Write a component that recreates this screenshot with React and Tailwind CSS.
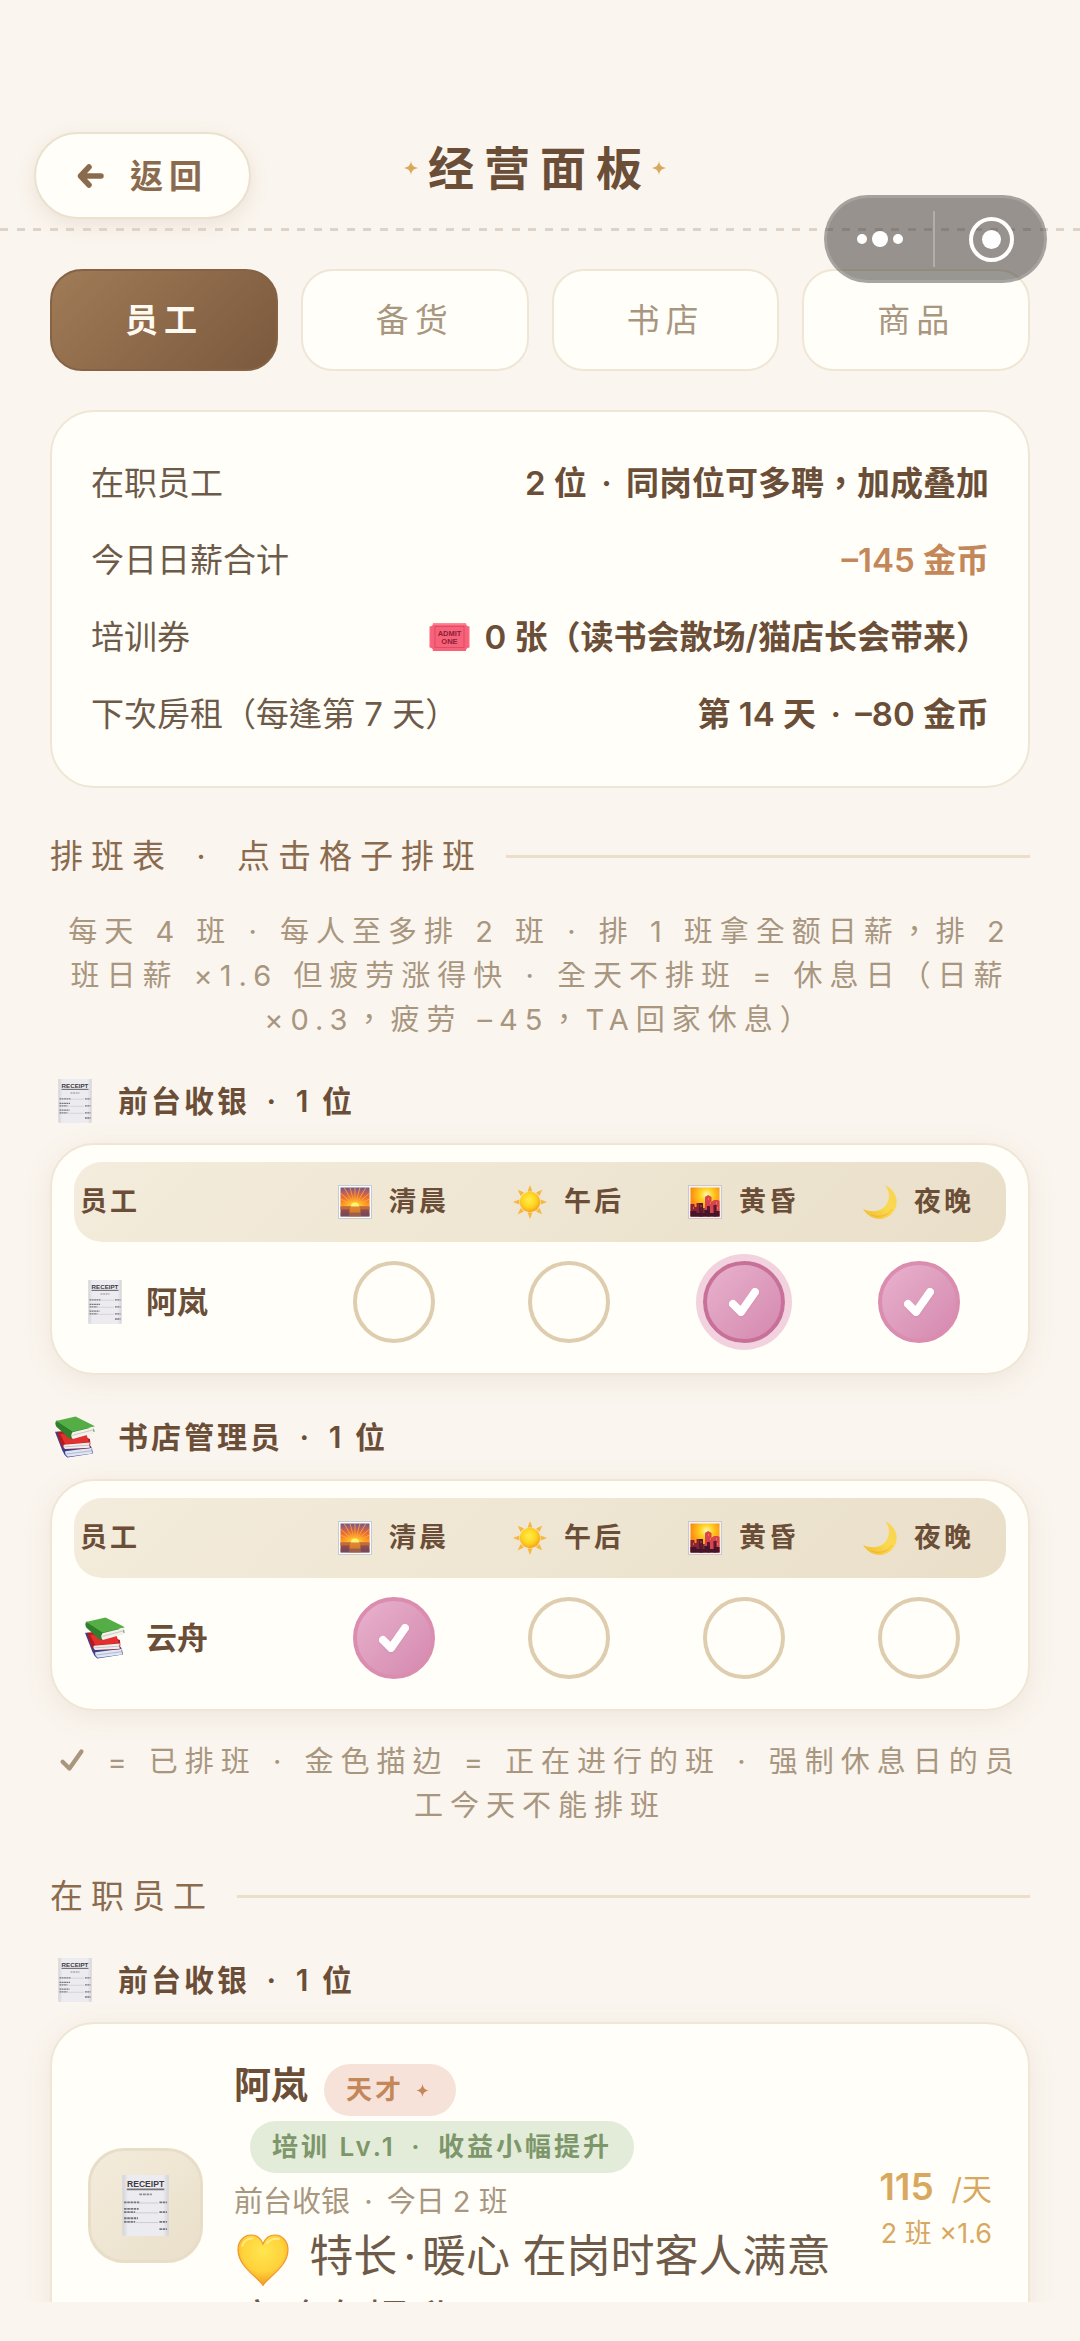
import { useState } from "react";
import clsx from "clsx";

const TABS = ["员工", "备货", "书店", "商品"];

const SHIFTS = [
  { id: "dawn", label: "清晨", Icon: SunriseIcon },
  { id: "noon", label: "午后", Icon: SunIcon },
  { id: "dusk", label: "黄昏", Icon: SunsetIcon },
  { id: "night", label: "夜晚", Icon: MoonIcon },
];

const GROUPS = [
  {
    role: "前台收银",
    Icon: ReceiptIcon,
    staff: [{ name: "阿岚", shifts: ["dusk", "night"], current: "dusk" }],
  },
  {
    role: "书店管理员",
    Icon: BooksIcon,
    staff: [{ name: "云舟", shifts: ["dawn"], current: null }],
  },
];

/* ===== Icons ===== */

function Sparkle({ className }) {
  return (
    <svg viewBox="0 0 14 14" className={className} fill="currentColor" aria-hidden="true">
      <path d="M7 0C7.7 4.2 9.2 6.1 14 7 9.2 7.9 7.7 9.8 7 14 6.3 9.8 4.8 7.9 0 7 4.8 6.1 6.3 4.2 7 0Z" />
    </svg>
  );
}

function BackArrow() {
  return (
    <svg
      viewBox="0 0 27 24"
      className="w-[27px] h-6"
      fill="none"
      stroke="currentColor"
      strokeWidth="5.5"
      strokeLinecap="round"
      strokeLinejoin="round"
      aria-hidden="true"
    >
      <path d="M24 12H4M12 3 3.5 12 12 21" />
    </svg>
  );
}

function Tick({ className }) {
  return (
    <svg
      viewBox="0 0 30 28"
      className={className}
      fill="none"
      stroke="currentColor"
      strokeLinecap="round"
      strokeLinejoin="round"
      aria-hidden="true"
    >
      <path d="M4 16 12 24 26 4" />
    </svg>
  );
}

function ReceiptIcon({ className }) {
  return (
    <svg viewBox="0 0 34 44" className={clsx("tracking-normal", className)} aria-hidden="true">
      <defs>
        <linearGradient id="receiptPaper" x1="0" x2="1" y1="0" y2="0">
          <stop offset="0" stopColor="#d3d2d6" />
          <stop offset="0.12" stopColor="#ecebf0" />
          <stop offset="0.88" stopColor="#ecebf0" />
          <stop offset="1" stopColor="#d3d2d6" />
        </linearGradient>
      </defs>
      <path d="M.3 0H33.7V42.5Q33.7 44 32.5 44H1.5Q.3 44 .3 42.5Z" fill="url(#receiptPaper)" />
      <text
        x="17"
        y="8.6"
        textAnchor="middle"
        fontFamily="Liberation Sans, sans-serif"
        fontSize="6.2"
        fontWeight="700"
        fill="#3c3a3e"
      >
        RECEIPT
      </text>
      <path d="M3.5 10.4h27" stroke="#77757a" strokeWidth="1.2" />
      <path d="M12.5 14h9" stroke="#8d8b90" strokeWidth="1.2" strokeDasharray="2 .6" />
      <path
        d="M1.5 19.8h11M27 19.8h5.5M1.5 24.4h10.5M1.5 26.8h8M27 26.8h5.5M1.5 31.2h10M1.5 33.8h8M27 33.8h5.5M27 39h5.5"
        stroke="#77757a"
        strokeWidth="1.3"
        strokeDasharray="1.8 .5"
      />
      <path d="M12 20.2h14M10 27.3h16M10 34.3h16" stroke="#c8c6cb" strokeWidth=".6" />
    </svg>
  );
}

function BooksIcon({ className }) {
  return (
    <svg viewBox="0 0 39 40" className={className} aria-hidden="true">
      <path d="M0 15 9 15 35 29 36 31 37 36 12 40Q9 38 7 33Z" fill="#3a3f8f" />
      <path d="M10 34 36 30.5Q34.8 33 36.5 36L12.5 39.2Q9.4 37.5 10 34Z" fill="#dfe6f2" />
      <path d="M11 36.6 36 33.4" stroke="#9aa9c6" strokeWidth=".7" />
      <path d="M2 15 14 14 34 22 34.5 26 34 31 10 32Q6 30 4 22Z" fill="#b3191d" />
      <path d="M5 17 30 15 33 25 10 27Z" fill="#e2302e" />
      <path d="M8.5 27.6 34 25.4Q32.6 28 34 30.4L10 31.6Q7.6 30.6 8.5 27.6Z" fill="#f0eeee" />
      <path d="M9 29.6 33.4 28" stroke="#b9b3b3" strokeWidth=".7" />
      <path d="M1 4 16 20 38.5 14.8 38 12Z" fill="#2d7c2a" />
      <path d="M1 4.5 20 0 39 9.6 17 15Z" fill="#55ad45" />
      <path d="M1 4.5Q-.5 7 1.4 10L14 21.4 17 22Q14 19 17 15Z" fill="#2f7f2c" />
      <path d="M17 15.4 38.6 10Q36.4 13 38.2 16L17.4 22Q14.6 19 17 15.4Z" fill="#f3f1ec" />
      <path d="M17 18.4 37.4 13" stroke="#bcb8ae" strokeWidth=".7" />
    </svg>
  );
}

function SunriseIcon({ className }) {
  return (
    <svg viewBox="0 0 34 34" className={className} aria-hidden="true">
      <defs>
        <linearGradient id="dawnSky" x1="0" x2="0" y1="0" y2="1">
          <stop offset="0" stopColor="#75578a" />
          <stop offset="0.45" stopColor="#e3663f" />
          <stop offset="1" stopColor="#ff9a20" />
        </linearGradient>
        <radialGradient id="dawnSun" cx="0.5" cy="1" r="0.62">
          <stop offset="0" stopColor="#fff59a" />
          <stop offset="0.3" stopColor="#ffc52c" />
          <stop offset="1" stopColor="#ff8a20" stopOpacity="0" />
        </radialGradient>
      </defs>
      <rect x=".5" y=".5" width="33" height="33" fill="#fdfdfd" stroke="#c3ccd2" />
      <rect x="2.5" y="2.5" width="29" height="19" fill="url(#dawnSky)" />
      <path
        d="M17 21 2.5 8M17 21 6 2.5M17 21 12 2.5M17 21V2.5M17 21 22 2.5M17 21 28 2.5M17 21 31.5 8M17 21 2.5 14M17 21 31.5 14"
        stroke="#ffb43c"
        strokeWidth="1"
        opacity=".75"
      />
      <rect x="2.5" y="2.5" width="29" height="19" fill="url(#dawnSun)" />
      <rect x="2.5" y="21.5" width="29" height="10" fill="#8c4c4e" />
      <path d="M2.5 21.5h29v3h-29z" fill="#c56a35" />
      <path d="M12 21.5h10l1 10H11z" fill="#e58a2c" opacity=".85" />
      <path d="M2.5 27.5h29v4h-29z" fill="#6d4560" opacity=".55" />
      <path d="M13 21.5a4 4 0 0 1 8 0Z" fill="#fff27a" />
    </svg>
  );
}

function SunIcon({ className }) {
  return (
    <svg viewBox="0 0 34 34" className={className} aria-hidden="true">
      <defs>
        <radialGradient id="sunDisc" cx="0.45" cy="0.4" r="0.6">
          <stop offset="0" stopColor="#fff04a" />
          <stop offset="0.6" stopColor="#ffd21f" />
          <stop offset="1" stopColor="#f5a31a" />
        </radialGradient>
      </defs>
      <g fill="#f6b73a">
        <path d="M17 0l2.4 6.4h-4.8z" />
        <path d="M17 34l2.4-6.4h-4.8z" />
        <path d="M0 17l6.4-2.4v4.8z" />
        <path d="M34 17l-6.4-2.4v4.8z" />
        <path d="M4.8 4.8l6.2 2.8-3.4 3.4z" />
        <path d="M29.2 4.8l-6.2 2.8 3.4 3.4z" />
        <path d="M4.8 29.2l6.2-2.8-3.4-3.4z" />
        <path d="M29.2 29.2l-6.2-2.8 3.4-3.4z" />
      </g>
      <circle cx="17" cy="17" r="10.2" fill="url(#sunDisc)" />
    </svg>
  );
}

function SunsetIcon({ className }) {
  return (
    <svg viewBox="0 0 34 34" className={className} aria-hidden="true">
      <defs>
        <radialGradient id="duskSky" cx="0.55" cy="0.25" r="0.8">
          <stop offset="0" stopColor="#fff8b0" />
          <stop offset="0.25" stopColor="#ffd428" />
          <stop offset="0.6" stopColor="#ff9a10" />
          <stop offset="1" stopColor="#ee5a18" />
        </radialGradient>
      </defs>
      <rect x=".5" y=".5" width="33" height="33" fill="#f6f4f6" stroke="#c9c7cc" />
      <rect x="2.5" y="2.5" width="29" height="29" fill="url(#duskSky)" />
      <path d="M17 31.5V12l3-2 3.5 2v5l2.5-2h4l1.5 1v15.5Z" fill="#d8434e" />
      <path d="M2.5 31.5V19h4v3h2v-4h5v5h4v8.5Z" fill="#8a2434" />
      <path d="M11 31.5V18h4v13.5ZM19 31.5V21h3v10.5ZM25.5 31.5V20h3v11.5Z" fill="#571a30" />
      <path d="M2.5 31.5V26h6v2h8v-3h5v3h5v-2h5v5.5Z" fill="#451428" />
      <path d="M5 23h1M12.5 21h1M20 14h1M22 18h1M28 18h1M29 23h1M16.5 24h1" stroke="#ffb03c" strokeWidth="1" />
    </svg>
  );
}

function MoonIcon({ className }) {
  return (
    <svg viewBox="0 0 34 34" className={className} aria-hidden="true">
      <defs>
        <linearGradient id="moonFace" x1="0" x2="1" y1="1" y2="0">
          <stop offset="0" stopColor="#f2b92c" />
          <stop offset="0.5" stopColor="#fbd94e" />
          <stop offset="1" stopColor="#f7d455" />
        </linearGradient>
      </defs>
      <path
        d="M22 0C31 4 35.5 13 33 21.5 30 31.5 20 36 11 33 6 31.2 2 28 0 24 9 28 19 26.5 23.5 19.5 27.5 13 26.5 5.5 22 0Z"
        fill="url(#moonFace)"
      />
      <path d="M8 30c8 3 17 1 21-6" fill="none" stroke="#e6a92a" strokeWidth="1" opacity=".6" />
    </svg>
  );
}

function TicketIcon({ className }) {
  return (
    <svg viewBox="0 0 41 28" className={className} aria-hidden="true">
      <path
        d="M4 0H37A3.5 3.5 0 0 0 40.5 3.5V24.5A3.5 3.5 0 0 0 37 28H4A3.5 3.5 0 0 0 .5 24.5V3.5A3.5 3.5 0 0 0 4 0Z"
        fill="#f7617a"
      />
      <path d="M.5 5v18M40.5 5v18" stroke="#fbb6bf" strokeWidth="1.4" strokeDasharray="1.2 1.4" />
      <rect x="6" y="3.5" width="29" height="21" fill="none" stroke="#d9475f" strokeWidth=".8" />
      <path d="M4 .8h33" stroke="#ff97a6" strokeWidth="1.2" />
      <g
        fontFamily="Liberation Sans, sans-serif"
        fontSize="7.5"
        fontWeight="700"
        fill="#8c2236"
        textAnchor="middle"
      >
        <text x="20.5" y="12.5">ADMIT</text>
        <text x="20.5" y="21">ONE</text>
      </g>
    </svg>
  );
}

function HeartIcon({ className }) {
  return (
    <svg viewBox="0 0 52 52" className={className} aria-hidden="true">
      <defs>
        <radialGradient id="heartFill" cx="0.5" cy="0.32" r="0.68">
          <stop offset="0" stopColor="#ffe650" />
          <stop offset="0.6" stopColor="#ffd23a" />
          <stop offset="1" stopColor="#f39a1e" />
        </radialGradient>
      </defs>
      <path
        d="M26 51.5C22 44 1 33 1 15.5 1 7 7 1 14 1c5.5 0 10 3.5 12 9 2-5.5 6.5-9 12-9 7 0 13 6 13 14.5C51 33 30 44 26 51.5Z"
        fill="url(#heartFill)"
        stroke="#f0962a"
        strokeWidth="1.2"
      />
      <path d="M5 12Q8 4 15 4.5M30 9Q35 3.5 42 5" fill="none" stroke="#fff3a0" strokeWidth="2" strokeLinecap="round" opacity=".7" />
    </svg>
  );
}

/* ===== Shared pieces ===== */

function Dot({ tight }) {
  return <span className={tight ? "px-px" : "px-[6px]"}>·</span>;
}

function SectionTitle({ children }) {
  return (
    <div className="mt-[46px] flex items-center gap-[23px]">
      <h2 className="text-[33px] leading-[44px] tracking-[8px] text-[#8b6b4e]">{children}</h2>
      <div className="h-[3px] flex-1 bg-[#ebdfca]" />
    </div>
  );
}

function Hint({ className, children }) {
  return (
    <p
      className={clsx(
        "text-center text-[29px] leading-[44px] tracking-[7px] text-[#a8967f]",
        className,
      )}
    >
      {children}
    </p>
  );
}

function GroupTitle({ Icon, role, count }) {
  return (
    <h3 className="flex items-center gap-[23px] pl-[5px] text-[30px] leading-[44px] tracking-[3px] font-semibold text-[#6b4e37]">
      <span className="w-10 flex justify-center">
        <Icon className="h-11 max-w-10" />
      </span>
      <span>
        {role} <Dot /> {count} 位
      </span>
    </h3>
  );
}

function StatRow({ label, children, accent }) {
  return (
    <div className="h-[77px] flex items-center justify-between text-[33px] leading-[44px]">
      <dt className="text-[#6e5a48]">{label}</dt>
      <dd
        className={clsx(
          "flex items-center font-semibold whitespace-pre",
          accent ? "text-[#c4875a]" : "text-[#6b4e37]",
        )}
      >
        {children}
      </dd>
    </div>
  );
}

function ShiftToggle({ label, checked, current, onChange }) {
  return (
    <label className="grid place-items-center text-white cursor-pointer">
      <input
        type="checkbox"
        aria-label={label}
        checked={checked}
        onChange={onChange}
        className={clsx(
          "col-start-1 row-start-1 size-[82px] appearance-none rounded-full border-4",
          !checked && "border-[#decdae]",
          checked && "bg-linear-135 from-[#e8b2cd] to-[#d488ae]",
          checked && !current && "border-[#db8db0]",
          checked && current && "border-[#c77199] ring-[7px] ring-[#f1d2de]",
        )}
      />
      {checked && (
        <Tick className="col-start-1 row-start-1 w-[30px] h-7 stroke-[8] drop-shadow-xs pointer-events-none" />
      )}
    </label>
  );
}

function ShiftTable({ group, schedule, onToggle }) {
  const { Icon, staff } = group;

  return (
    <table className="mt-5 block rounded-[44px] border-2 border-[#efe6d5] bg-[#fffef9] px-[22px] py-[17px] text-[#6b4e37] shadow-[0_6px_28px_rgba(139,107,78,0.1)]">
      <thead className="block rounded-[28px] bg-linear-135 from-[#f4ecdc] to-[#e9dfc9]">
        <tr className="grid h-20 grid-cols-[232fr_175fr_175fr_175fr_175fr] items-center text-[27px] leading-[40px] tracking-[3px]">
          <th className="pl-[6px] text-left font-semibold">员工</th>
          {SHIFTS.map((shift) => (
            <th key={shift.id} className="flex items-center justify-center gap-[17px] font-semibold">
              <shift.Icon className="size-[34px]" />
              {shift.label}
            </th>
          ))}
        </tr>
      </thead>
      <tbody className="block">
        {staff.map((person) => (
          <tr
            key={person.name}
            className="grid grid-cols-[232fr_175fr_175fr_175fr_175fr] items-center pt-[19px] pb-[13px]"
          >
            <th className="flex items-center gap-[21px] pl-[11px] text-[31px] leading-[44px] font-semibold">
              <span className="w-10 flex justify-center">
                <Icon className="h-11 max-w-10" />
              </span>
              {person.name}
            </th>
            {SHIFTS.map((shift) => (
              <td key={shift.id} className="flex justify-center">
                <ShiftToggle
                  label={`${person.name} ${shift.label}`}
                  checked={schedule[person.name].includes(shift.id)}
                  current={person.current === shift.id}
                  onChange={() => onToggle(person.name, shift.id)}
                />
              </td>
            ))}
          </tr>
        ))}
      </tbody>
    </table>
  );
}

function Capsule() {
  return (
    <div className="absolute top-[195px] right-[33px] flex h-[88px] w-[223px] items-center rounded-full border-[3px] border-white/15 bg-[#33302c]/50">
      <button aria-label="更多" className="flex-1 flex items-center justify-center gap-[5px]">
        <span className="size-[10px] rounded-full bg-white" />
        <span className="size-4 rounded-full bg-white" />
        <span className="size-[10px] rounded-full bg-white" />
      </button>
      <span className="h-14 w-[2px] bg-white/25" />
      <button aria-label="关闭" className="flex-1 flex items-center justify-center pl-[3px]">
        <span className="size-[45px] rounded-full border-4 border-white flex items-center justify-center">
          <span className="size-[19px] rounded-full bg-white" />
        </span>
      </button>
    </div>
  );
}

/* ===== Page ===== */

function App() {
  const [activeTab, setActiveTab] = useState("员工");
  const [schedule, setSchedule] = useState({
    阿岚: GROUPS[0].staff[0].shifts,
    云舟: GROUPS[1].staff[0].shifts,
  });

  const toggleShift = (name, id) => {
    setSchedule((prev) => ({
      ...prev,
      [name]: prev[name].includes(id)
        ? prev[name].filter((s) => s !== id)
        : [...prev[name], id],
    }));
  };

  return (
    <div className="relative h-screen flex flex-col overflow-hidden bg-[#faf5ee] pb-[39px] font-[Inter,'Noto_Sans_CJK_TC',sans-serif] text-[#6b4e37]">
      {/* Header */}
      <header className="grid grid-cols-[1fr_auto_1fr] items-start px-[34px] pt-[132px] pb-[9px]">
        <button className="flex h-[87px] items-center gap-[26px] justify-self-start rounded-full border-2 border-[#ebe1ce] bg-[#fffef9] px-[41px] text-[33px] leading-[44px] tracking-[6px] font-semibold text-[#8b6b4e] shadow-[0_6px_20px_rgba(139,107,78,0.12)]">
          <BackArrow />
          返回
        </button>
        <h1 className="flex items-center text-[46px] leading-[72px] tracking-[10px] font-bold">
          <Sparkle className="mr-[10px] size-[14px] text-[#d9a85f]" />
          经营面板
          <Sparkle className="mr-[10px] size-[14px] text-[#d9a85f]" />
        </h1>
      </header>
      <div className="h-[3px] shrink-0 bg-[linear-gradient(90deg,#dfd3c8_8px,transparent_8px_17px,#dfd3c8_17px_25px,transparent_25px)] bg-size-[33px_3px]" />

      {/* Scrolling content */}
      <main className="min-h-0 flex-1 overflow-y-auto px-[50px] pt-[38px] [scrollbar-width:none]">
        <nav className="grid grid-cols-4 gap-[23px]">
          {TABS.map((tab) => (
            <button
              key={tab}
              onClick={() => setActiveTab(tab)}
              className={clsx(
                "h-[102px] rounded-[32px] border-2 text-[33px] leading-[44px] tracking-[6px]",
                tab === activeTab
                  ? "border-[#866345] bg-linear-135 from-[#a07b57] to-[#7b593d] font-semibold text-[#fffaf0]"
                  : "border-[#efe6d5] bg-[#fffef9] text-[#a8967f]",
              )}
            >
              {tab}
            </button>
          ))}
        </nav>

        <dl className="mt-[39px] rounded-[44px] border-2 border-[#efe6d5] bg-[#fffef9] px-[39px] pt-8 pb-[34px]">
          <StatRow label="在职员工">
            2 位 <Dot /> 同岗位可多聘，加成叠加
          </StatRow>
          <StatRow label="今日日薪合计" accent>
            –145 金币
          </StatRow>
          <StatRow label="培训券">
            <TicketIcon className="mr-[14px] w-[41px] h-7" />0 张（读书会散场/猫店长会带来）
          </StatRow>
          <StatRow label="下次房租（每逢第 7 天）">
            第 14 天 <Dot /> –80 金币
          </StatRow>
        </dl>

        <SectionTitle>
          排班表 <Dot /> 点击格子排班
        </SectionTitle>
        <Hint className="mt-8">
          每天 4 班 <Dot tight /> 每人至多排 2 班 <Dot tight /> 排 1 班拿全额日薪，排 2 班日薪 ×1.6
          但疲劳涨得快 <Dot tight /> 全天不排班 = 休息日（日薪 ×0.3，疲劳 –45，TA回家休息）
        </Hint>

        <div className="mt-[37px] flex flex-col gap-10">
          {GROUPS.map((group) => (
            <section key={group.role}>
              <GroupTitle Icon={group.Icon} role={group.role} count={group.staff.length} />
              <ShiftTable group={group} schedule={schedule} onToggle={toggleShift} />
            </section>
          ))}
        </div>

        <Hint className="mt-[29px]">
          <Tick className="mr-[7px] inline-block h-6 w-[26px] align-baseline stroke-[5]" /> = 已排班{" "}
          <Dot tight /> 金色描边 = 正在进行的班 <Dot tight /> 强制休息日的员工今天不能排班
        </Hint>

        <SectionTitle>在职员工</SectionTitle>
        <div className="mt-10">
          <GroupTitle Icon={ReceiptIcon} role="前台收银" count={1} />
          <article className="mt-5 flex items-center rounded-[44px] border-2 border-[#efe6d5] bg-[#fffef9] px-9 py-[33px] shadow-[0_6px_28px_rgba(139,107,78,0.1)]">
            <div className="flex size-[115px] shrink-0 items-center justify-center rounded-[36px] border-[3px] border-[#e8dec8] bg-linear-135 from-[#f4ecdc] to-[#e9dfc9]">
              <ReceiptIcon className="h-[61px]" />
            </div>
            <div className="ml-[31px] min-w-0 flex-1 pt-[7px]">
              <div className="flex flex-wrap items-start gap-y-[5px]">
                <h4 className="text-[37px] leading-[44px] font-semibold">阿岚</h4>
                <span className="ml-4 flex h-[52px] items-center gap-3 rounded-full bg-[#f6e2d8] px-[22px] text-[26px] leading-[36px] tracking-[3px] font-semibold text-[#c4875a]">
                  天才
                  <Sparkle className="mr-[5px] size-[13px]" />
                </span>
                <span className="ml-4 h-[52px] rounded-full bg-[#e2ecd9] px-[22px] text-[26px] leading-[52px] tracking-[3px] font-semibold text-[#7d966a]">
                  培训 Lv.1 <Dot /> 收益小幅提升
                </span>
              </div>
              <p className="mt-[7px] text-[29px] leading-[44px] text-[#a8967f]">
                前台收银 <Dot /> 今日 2 班
              </p>
              <p className="text-[44px] leading-[65px] text-[#6e5a48]">
                <HeartIcon className="mr-2 ml-[3px] inline-block size-[52px]" /> 特长
                <Dot />
                暖心 在岗时客人满意度略有提升
              </p>
            </div>
            <div className="ml-8 shrink-0 pt-[9px] text-right text-[#d9a85f]">
              <p className="text-[30px] leading-[46px]">
                <strong className="mr-[9px] text-[37px] font-semibold">115</strong> /天
              </p>
              <p className="text-[27px] leading-[44px]">2 班 ×1.6</p>
            </div>
          </article>
        </div>
      </main>

      <Capsule />
    </div>
  );
}

export default App;
